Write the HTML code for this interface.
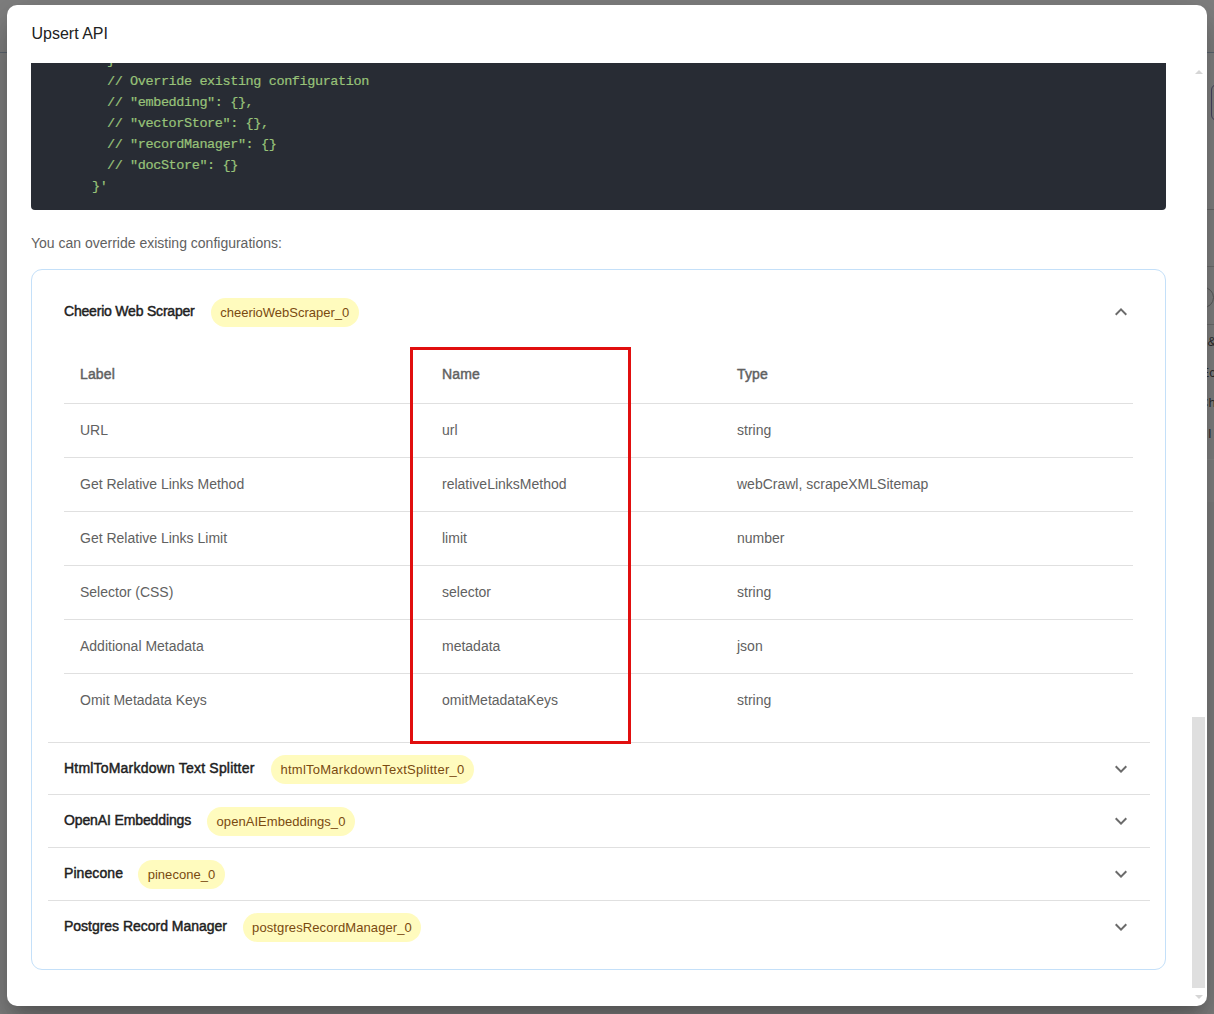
<!DOCTYPE html>
<html><head><meta charset="utf-8"><style>
html,body{margin:0;padding:0;}
body{width:1214px;height:1014px;overflow:hidden;position:relative;background:#808080;font-family:'Liberation Sans', sans-serif;}
</style></head><body>
<div style="position:absolute;left:0px;top:52px;width:1214px;height:1px;background:#5d6670;"></div>
<div style="position:absolute;left:1207px;top:209px;width:7px;height:1px;background:#666;"></div>
<div style="position:absolute;left:1207px;top:266px;width:7px;height:1px;background:#6a6a6a;"></div>
<div style="position:absolute;left:1207px;top:324px;width:7px;height:1px;background:#6a6a6a;"></div>
<div style="position:absolute;left:1207px;top:53px;width:7px;height:449px;background:rgba(255,255,255,0.035);"></div>
<div style="position:absolute;left:1207px;top:459px;width:7px;height:1px;background:rgba(255,255,255,0.05);"></div>
<div style="position:absolute;left:1211px;top:84px;width:20px;height:37px;border:1px solid #4a4560;border-radius:6px;box-sizing:border-box;"></div>
<div style="position:absolute;left:1192.5px;top:287px;width:21px;height:21px;border:1px solid #5c5c5c;border-radius:50%;box-sizing:border-box;"></div>
<div style="position:absolute;left:1207.5px;top:335.00px;font-size:13px;line-height:13px;color:#2e2e2e;font-weight:normal;letter-spacing:0px;white-space:pre;font-family:'Liberation Sans', sans-serif;">&amp;</div>
<div style="position:absolute;left:1200.5px;top:366.00px;font-size:13px;line-height:13px;color:#2e2e2e;font-weight:normal;letter-spacing:0px;white-space:pre;font-family:'Liberation Sans', sans-serif;">Ec</div>
<div style="position:absolute;left:1199px;top:396.00px;font-size:13px;line-height:13px;color:#2e2e2e;font-weight:normal;letter-spacing:0px;white-space:pre;font-family:'Liberation Sans', sans-serif;">Ch</div>
<div style="position:absolute;left:1208px;top:427.00px;font-size:13px;line-height:13px;color:#2e2e2e;font-weight:normal;letter-spacing:0px;white-space:pre;font-family:'Liberation Sans', sans-serif;">I</div>
<div style="position:absolute;left:7px;top:5px;width:1200px;height:1001px;background:#fff;border-radius:10px;box-shadow:0 11px 15px -7px rgba(0,0,0,.2),0 24px 38px 3px rgba(0,0,0,.14),0 9px 46px 8px rgba(0,0,0,.12);overflow:hidden;">
</div>
<div style="position:absolute;left:31.5px;top:26.46px;font-size:16px;line-height:16px;color:#212121;font-weight:normal;letter-spacing:0px;white-space:pre;font-family:'Liberation Sans', sans-serif;">Upsert API</div>
<div style="position:absolute;left:31px;top:63px;width:1135px;height:146.5px;background:#282c34;border-radius:0 0 4px 4px;overflow:hidden;">
<div style="position:absolute;left:76px;top:-9.21px;font-family:'Liberation Mono', monospace;font-size:13.5px;line-height:13.5px;color:#98c379;letter-spacing:-0.4px;white-space:pre;-webkit-text-stroke:0.2px #98c379;">}</div>
<div style="position:absolute;left:76px;top:11.79px;font-family:'Liberation Mono', monospace;font-size:13.5px;line-height:13.5px;color:#98c379;letter-spacing:-0.4px;white-space:pre;-webkit-text-stroke:0.2px #98c379;">// Override existing configuration</div>
<div style="position:absolute;left:76px;top:32.80px;font-family:'Liberation Mono', monospace;font-size:13.5px;line-height:13.5px;color:#98c379;letter-spacing:-0.4px;white-space:pre;-webkit-text-stroke:0.2px #98c379;">// "embedding": {},</div>
<div style="position:absolute;left:76px;top:53.80px;font-family:'Liberation Mono', monospace;font-size:13.5px;line-height:13.5px;color:#98c379;letter-spacing:-0.4px;white-space:pre;-webkit-text-stroke:0.2px #98c379;">// "vectorStore": {},</div>
<div style="position:absolute;left:76px;top:74.80px;font-family:'Liberation Mono', monospace;font-size:13.5px;line-height:13.5px;color:#98c379;letter-spacing:-0.4px;white-space:pre;-webkit-text-stroke:0.2px #98c379;">// "recordManager": {}</div>
<div style="position:absolute;left:76px;top:95.80px;font-family:'Liberation Mono', monospace;font-size:13.5px;line-height:13.5px;color:#98c379;letter-spacing:-0.4px;white-space:pre;-webkit-text-stroke:0.2px #98c379;">// "docStore": {}</div>
<div style="position:absolute;left:61px;top:116.80px;font-family:'Liberation Mono', monospace;font-size:13.5px;line-height:13.5px;color:#98c379;letter-spacing:-0.4px;white-space:pre;-webkit-text-stroke:0.2px #98c379;">}'</div>
</div>
<div style="position:absolute;left:31px;top:235.75px;font-size:14px;line-height:14px;color:#616161;font-weight:normal;letter-spacing:0px;white-space:pre;font-family:'Liberation Sans', sans-serif;">You can override existing configurations:</div>
<div style="position:absolute;left:31px;top:269px;width:1135px;height:701px;border:1px solid #c4e0f9;border-radius:11px;box-sizing:border-box;"></div>
<div style="position:absolute;left:64px;top:304.15px;font-size:14px;line-height:14px;color:#212121;font-weight:normal;letter-spacing:-0.2px;white-space:pre;font-family:'Liberation Sans', sans-serif;-webkit-text-stroke:0.45px currentColor;">Cheerio Web Scraper</div>
<div style="position:absolute;left:211px;top:297.90px;width:147.5px;height:29px;background:#fffbbe;border-radius:15px;"></div>
<div style="position:absolute;left:211px;top:305.90px;font-size:13px;line-height:13px;color:#7a4a10;font-weight:normal;letter-spacing:0px;white-space:pre;font-family:'Liberation Sans', sans-serif;width:147.5px;text-align:center;">cheerioWebScraper_0</div>
<svg style="position:absolute;left:1109px;top:299.5px;transform:rotate(180deg);" width="24" height="24" viewBox="0 0 24 24"><path fill="#6b6b6b" d="M16.59 8.59 12 13.17 7.41 8.59 6 10l6 6 6-6z"/></svg>
<div style="position:absolute;left:80px;top:367.15px;font-size:14px;line-height:14px;color:#616161;font-weight:normal;letter-spacing:0.15px;white-space:pre;font-family:'Liberation Sans', sans-serif;-webkit-text-stroke:0.45px currentColor;">Label</div>
<div style="position:absolute;left:442px;top:367.15px;font-size:14px;line-height:14px;color:#616161;font-weight:normal;letter-spacing:0.15px;white-space:pre;font-family:'Liberation Sans', sans-serif;-webkit-text-stroke:0.45px currentColor;">Name</div>
<div style="position:absolute;left:737px;top:367.15px;font-size:14px;line-height:14px;color:#616161;font-weight:normal;letter-spacing:0.15px;white-space:pre;font-family:'Liberation Sans', sans-serif;-webkit-text-stroke:0.45px currentColor;">Type</div>
<div style="position:absolute;left:64px;top:403px;width:1069px;height:1px;background:#e0e0e0;"></div>
<div style="position:absolute;left:80px;top:423.15px;font-size:14px;line-height:14px;color:#616161;font-weight:normal;letter-spacing:0px;white-space:pre;font-family:'Liberation Sans', sans-serif;">URL</div>
<div style="position:absolute;left:442px;top:423.15px;font-size:14px;line-height:14px;color:#616161;font-weight:normal;letter-spacing:0px;white-space:pre;font-family:'Liberation Sans', sans-serif;">url</div>
<div style="position:absolute;left:737px;top:423.15px;font-size:14px;line-height:14px;color:#616161;font-weight:normal;letter-spacing:0px;white-space:pre;font-family:'Liberation Sans', sans-serif;">string</div>
<div style="position:absolute;left:64px;top:457px;width:1069px;height:1px;background:#e0e0e0;"></div>
<div style="position:absolute;left:80px;top:477.15px;font-size:14px;line-height:14px;color:#616161;font-weight:normal;letter-spacing:0px;white-space:pre;font-family:'Liberation Sans', sans-serif;">Get Relative Links Method</div>
<div style="position:absolute;left:442px;top:477.15px;font-size:14px;line-height:14px;color:#616161;font-weight:normal;letter-spacing:0px;white-space:pre;font-family:'Liberation Sans', sans-serif;">relativeLinksMethod</div>
<div style="position:absolute;left:737px;top:477.15px;font-size:14px;line-height:14px;color:#616161;font-weight:normal;letter-spacing:0px;white-space:pre;font-family:'Liberation Sans', sans-serif;">webCrawl, scrapeXMLSitemap</div>
<div style="position:absolute;left:64px;top:511px;width:1069px;height:1px;background:#e0e0e0;"></div>
<div style="position:absolute;left:80px;top:531.15px;font-size:14px;line-height:14px;color:#616161;font-weight:normal;letter-spacing:0px;white-space:pre;font-family:'Liberation Sans', sans-serif;">Get Relative Links Limit</div>
<div style="position:absolute;left:442px;top:531.15px;font-size:14px;line-height:14px;color:#616161;font-weight:normal;letter-spacing:0px;white-space:pre;font-family:'Liberation Sans', sans-serif;">limit</div>
<div style="position:absolute;left:737px;top:531.15px;font-size:14px;line-height:14px;color:#616161;font-weight:normal;letter-spacing:0px;white-space:pre;font-family:'Liberation Sans', sans-serif;">number</div>
<div style="position:absolute;left:64px;top:565px;width:1069px;height:1px;background:#e0e0e0;"></div>
<div style="position:absolute;left:80px;top:585.15px;font-size:14px;line-height:14px;color:#616161;font-weight:normal;letter-spacing:0px;white-space:pre;font-family:'Liberation Sans', sans-serif;">Selector (CSS)</div>
<div style="position:absolute;left:442px;top:585.15px;font-size:14px;line-height:14px;color:#616161;font-weight:normal;letter-spacing:0px;white-space:pre;font-family:'Liberation Sans', sans-serif;">selector</div>
<div style="position:absolute;left:737px;top:585.15px;font-size:14px;line-height:14px;color:#616161;font-weight:normal;letter-spacing:0px;white-space:pre;font-family:'Liberation Sans', sans-serif;">string</div>
<div style="position:absolute;left:64px;top:619px;width:1069px;height:1px;background:#e0e0e0;"></div>
<div style="position:absolute;left:80px;top:639.15px;font-size:14px;line-height:14px;color:#616161;font-weight:normal;letter-spacing:0px;white-space:pre;font-family:'Liberation Sans', sans-serif;">Additional Metadata</div>
<div style="position:absolute;left:442px;top:639.15px;font-size:14px;line-height:14px;color:#616161;font-weight:normal;letter-spacing:0px;white-space:pre;font-family:'Liberation Sans', sans-serif;">metadata</div>
<div style="position:absolute;left:737px;top:639.15px;font-size:14px;line-height:14px;color:#616161;font-weight:normal;letter-spacing:0px;white-space:pre;font-family:'Liberation Sans', sans-serif;">json</div>
<div style="position:absolute;left:64px;top:673px;width:1069px;height:1px;background:#e0e0e0;"></div>
<div style="position:absolute;left:80px;top:693.15px;font-size:14px;line-height:14px;color:#616161;font-weight:normal;letter-spacing:0px;white-space:pre;font-family:'Liberation Sans', sans-serif;">Omit Metadata Keys</div>
<div style="position:absolute;left:442px;top:693.15px;font-size:14px;line-height:14px;color:#616161;font-weight:normal;letter-spacing:0px;white-space:pre;font-family:'Liberation Sans', sans-serif;">omitMetadataKeys</div>
<div style="position:absolute;left:737px;top:693.15px;font-size:14px;line-height:14px;color:#616161;font-weight:normal;letter-spacing:0px;white-space:pre;font-family:'Liberation Sans', sans-serif;">string</div>
<div style="position:absolute;left:48px;top:742px;width:1102px;height:1px;background:#e0e0e0;"></div>
<div style="position:absolute;left:64px;top:761.45px;font-size:14px;line-height:14px;color:#212121;font-weight:normal;letter-spacing:0.2px;white-space:pre;font-family:'Liberation Sans', sans-serif;-webkit-text-stroke:0.45px currentColor;">HtmlToMarkdown Text Splitter</div>
<div style="position:absolute;left:271px;top:754.50px;width:203px;height:29px;background:#fffbbe;border-radius:15px;"></div>
<div style="position:absolute;left:271px;top:762.50px;font-size:13px;line-height:13px;color:#7a4a10;font-weight:normal;letter-spacing:0.25px;white-space:pre;font-family:'Liberation Sans', sans-serif;width:203px;text-align:center;">htmlToMarkdownTextSplitter_0</div>
<svg style="position:absolute;left:1109px;top:757px;" width="24" height="24" viewBox="0 0 24 24"><path fill="#6b6b6b" d="M16.59 8.59 12 13.17 7.41 8.59 6 10l6 6 6-6z"/></svg>
<div style="position:absolute;left:48px;top:794px;width:1102px;height:1px;background:#e0e0e0;"></div>
<div style="position:absolute;left:64px;top:813.45px;font-size:14px;line-height:14px;color:#212121;font-weight:normal;letter-spacing:-0.12px;white-space:pre;font-family:'Liberation Sans', sans-serif;-webkit-text-stroke:0.45px currentColor;">OpenAI Embeddings</div>
<div style="position:absolute;left:207px;top:806.50px;width:148px;height:29px;background:#fffbbe;border-radius:15px;"></div>
<div style="position:absolute;left:207px;top:814.50px;font-size:13px;line-height:13px;color:#7a4a10;font-weight:normal;letter-spacing:0.05px;white-space:pre;font-family:'Liberation Sans', sans-serif;width:148px;text-align:center;">openAIEmbeddings_0</div>
<svg style="position:absolute;left:1109px;top:809px;" width="24" height="24" viewBox="0 0 24 24"><path fill="#6b6b6b" d="M16.59 8.59 12 13.17 7.41 8.59 6 10l6 6 6-6z"/></svg>
<div style="position:absolute;left:48px;top:847px;width:1102px;height:1px;background:#e0e0e0;"></div>
<div style="position:absolute;left:64px;top:866.45px;font-size:14px;line-height:14px;color:#212121;font-weight:normal;letter-spacing:0.08px;white-space:pre;font-family:'Liberation Sans', sans-serif;-webkit-text-stroke:0.45px currentColor;">Pinecone</div>
<div style="position:absolute;left:138px;top:859.50px;width:87px;height:29px;background:#fffbbe;border-radius:15px;"></div>
<div style="position:absolute;left:138px;top:867.50px;font-size:13px;line-height:13px;color:#7a4a10;font-weight:normal;letter-spacing:0.05px;white-space:pre;font-family:'Liberation Sans', sans-serif;width:87px;text-align:center;">pinecone_0</div>
<svg style="position:absolute;left:1109px;top:862px;" width="24" height="24" viewBox="0 0 24 24"><path fill="#6b6b6b" d="M16.59 8.59 12 13.17 7.41 8.59 6 10l6 6 6-6z"/></svg>
<div style="position:absolute;left:48px;top:900px;width:1102px;height:1px;background:#e0e0e0;"></div>
<div style="position:absolute;left:64px;top:919.45px;font-size:14px;line-height:14px;color:#212121;font-weight:normal;letter-spacing:-0.02px;white-space:pre;font-family:'Liberation Sans', sans-serif;-webkit-text-stroke:0.45px currentColor;">Postgres Record Manager</div>
<div style="position:absolute;left:243px;top:912.50px;width:178px;height:29px;background:#fffbbe;border-radius:15px;"></div>
<div style="position:absolute;left:243px;top:920.50px;font-size:13px;line-height:13px;color:#7a4a10;font-weight:normal;letter-spacing:0.1px;white-space:pre;font-family:'Liberation Sans', sans-serif;width:178px;text-align:center;">postgresRecordManager_0</div>
<svg style="position:absolute;left:1109px;top:915px;" width="24" height="24" viewBox="0 0 24 24"><path fill="#6b6b6b" d="M16.59 8.59 12 13.17 7.41 8.59 6 10l6 6 6-6z"/></svg>
<div style="position:absolute;left:410px;top:347px;width:221px;height:397px;border:3px solid #e10f0f;box-sizing:border-box;"></div>
<div style="position:absolute;left:1192px;top:717px;width:13px;height:271px;background:#dfdfdf;"></div>
<div style="position:absolute;left:1194.5px;top:70px;width:0;height:0;border-left:4px solid transparent;border-right:4px solid transparent;border-bottom:4px solid #d6d6d6;"></div>
<div style="position:absolute;left:1194.5px;top:995px;width:0;height:0;border-left:4px solid transparent;border-right:4px solid transparent;border-top:4px solid #d6d6d6;"></div>
</body></html>
